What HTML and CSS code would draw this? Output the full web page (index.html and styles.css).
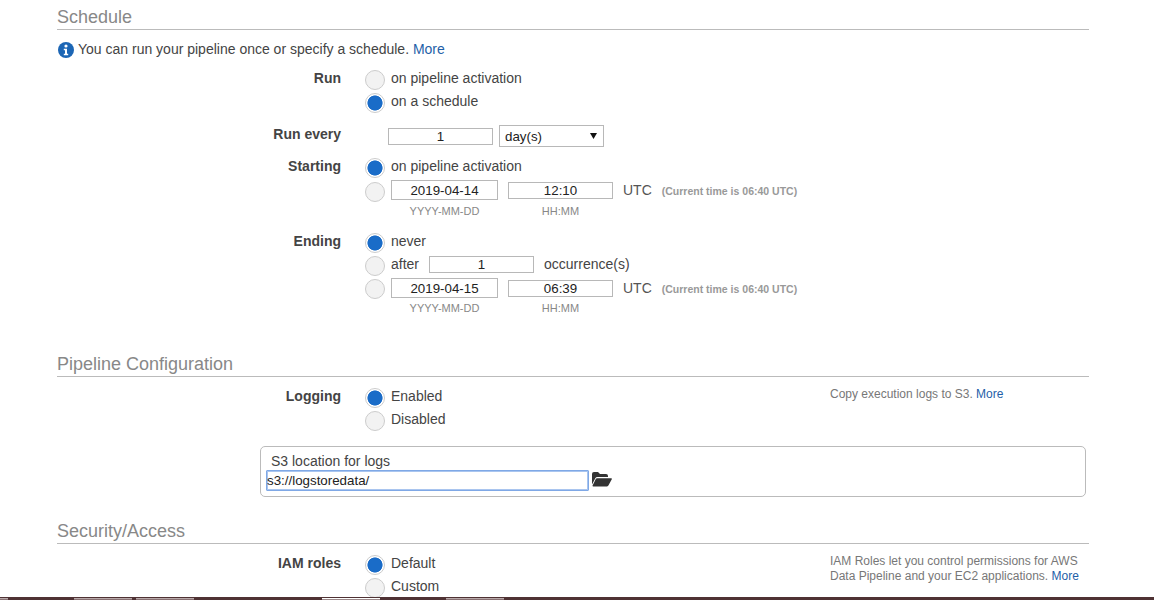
FILE: index.html
```html
<!DOCTYPE html>
<html lang="en">
<head>
<meta charset="utf-8">
<title>Schedule</title>
<link rel="stylesheet" href="styles.css">
</head>
<body>
<main class="page">
  <section class="schedule">
    <h2 class="heading">Schedule</h2>
    <p class="info">
      <svg class="info-icon" viewBox="0 0 16 16" width="16" height="16" aria-hidden="true"><circle cx="8" cy="8" r="8" fill="#1c66b5"/><circle cx="8" cy="4" r="1.6" fill="#fff"/><path d="M5.8 6.8h3.2v5h1.2v1.4H5.8v-1.4H7V8.2H5.8z" fill="#fff"/></svg>
      <span>You can run your pipeline once or specify a schedule. <a class="link" href="#">More</a></span>
    </p>
    <div class="field field-run">
      <div class="label">Run</div>
      <div class="controls">
        <label class="opt"><input class="radio" type="radio" name="run"><span>on pipeline activation</span></label>
        <label class="opt"><input class="radio" type="radio" name="run" checked><span>on a schedule</span></label>
      </div>
    </div>
    <div class="field field-every">
      <div class="label">Run every</div>
      <div class="every">
        <input class="box box-num" value="1">
        <div class="select"><span>day(s)</span><svg viewBox="0 0 7 6" width="7" height="6" aria-hidden="true"><path d="M0 0h7L3.500 6z" fill="#111"/></svg></div>
      </div>
    </div>
    <div class="field field-starting">
      <div class="label">Starting</div>
      <div class="controls">
        <label class="opt"><input class="radio" type="radio" name="start" checked><span>on pipeline activation</span></label>
        <div class="opt opt-date">
          <input class="radio" type="radio" name="start">
          <input class="box box-date" value="2019-04-14">
          <input class="box box-time" value="12:10">
          <span class="utc">UTC</span>
          <span class="now">(Current time is 06:40 UTC)</span>
        </div>
        <div class="hints"><span class="hint hint-date">YYYY-MM-DD</span><span class="hint">HH:MM</span></div>
      </div>
    </div>
    <div class="field field-ending">
      <div class="label">Ending</div>
      <div class="controls">
        <label class="opt"><input class="radio" type="radio" name="end" checked><span>never</span></label>
        <div class="opt">
          <input class="radio" type="radio" name="end">
          <span class="after">after</span>
          <input class="box box-num" value="1">
          <span class="occ">occurrence(s)</span>
        </div>
        <div class="opt opt-date">
          <input class="radio" type="radio" name="end">
          <input class="box box-date" value="2019-04-15">
          <input class="box box-time" value="06:39">
          <span class="utc">UTC</span>
          <span class="now">(Current time is 06:40 UTC)</span>
        </div>
        <div class="hints"><span class="hint hint-date">YYYY-MM-DD</span><span class="hint">HH:MM</span></div>
      </div>
    </div>
  </section>

  <section class="config">
    <h2 class="heading">Pipeline Configuration</h2>
    <div class="field field-help">
      <div class="label">Logging</div>
      <div class="controls">
        <label class="opt"><input class="radio" type="radio" name="log" checked><span>Enabled</span></label>
        <label class="opt"><input class="radio" type="radio" name="log"><span>Disabled</span></label>
      </div>
      <p class="help">Copy execution logs to S3. <a class="link" href="#">More</a></p>
    </div>
    <div class="s3">
      <div class="s3-label">S3 location for logs</div>
      <div class="s3-row">
        <input class="s3-input" value="s3://logstoredata/">
        <svg class="folder" viewBox="0 0 20 15" width="20" height="15" aria-hidden="true"><path d="M0 2a2 2 0 0 1 2-2h4l2 2h6a2 2 0 0 1 2 2v1H5.500a2.500 2.500 0 0 0-2.200 1.300L0 12.500z" fill="#333"/><path d="M5 6.200h14.200c.6 0 .9.5.6 1l-3.400 6.400a1.500 1.500 0 0 1-1.300.8H1.200c-.6 0-.9-.5-.6-1L3.800 7a1.400 1.400 0 0 1 1.200-.8z" fill="#333"/></svg>
      </div>
    </div>
  </section>

  <section class="security">
    <h2 class="heading">Security/Access</h2>
    <div class="field field-help">
      <div class="label">IAM roles</div>
      <div class="controls">
        <label class="opt"><input class="radio" type="radio" name="iam" checked><span>Default</span></label>
        <label class="opt"><input class="radio" type="radio" name="iam"><span>Custom</span></label>
      </div>
      <p class="help">IAM Roles let you control permissions for AWS<br>Data Pipeline and your EC2 applications. <a class="link" href="#">More</a></p>
    </div>
  </section>
</main>
<footer class="bar">
  <span class="tab tab-first"></span>
  <span class="tab tab-2"></span>
  <span class="tab tab-3"></span>
  <span class="tab tab-4 tab-active"></span>
  <span class="tab tab-5"></span>
</footer>
</body>
</html>
```
FILE: styles.css
```css
* { box-sizing: border-box; }
html, body { margin: 0; padding: 0; }
body {
  width: 1154px;
  height: 600px;
  overflow: hidden;
  display: flex;
  flex-direction: column;
  background: #fff;
  font-family: "Liberation Sans", Arial, sans-serif;
  font-size: 14px;
  color: #444;
}
.page { flex: 1; min-height: 0; overflow: hidden; padding: 0 65px 0 57px; }
.heading {
  margin: 0;
  height: 30px;
  padding-top: 6px;
  font-size: 18px;
  line-height: 22px;
  font-weight: 400;
  color: #888;
  border-bottom: 1px solid #bbb;
}
.info { display: flex; align-items: center; gap: 4px; margin: 11px 0 0 1px; height: 17px; line-height: 17px; }
.info-icon { flex: none; }
.link { color: #1f5fa8; text-decoration: none; }
.field { display: flex; }
.label { width: 284px; flex: none; text-align: right; font-weight: 700; line-height: 17px; }
.controls { margin-left: 24px; display: flex; flex-direction: column; gap: 3px; }
.opt { display: flex; align-items: flex-start; height: 20px; gap: 6px; line-height: 17px; }
.radio {
  appearance: none;
  -webkit-appearance: none;
  flex: none;
  width: 20px;
  height: 20px;
  margin: 0;
  border-radius: 50%;
  border: 1px solid #ccc;
  background: #f2f2f2;
}
.radio:checked {
  background: radial-gradient(circle, #1a6cc8 0 7.200px, #fff 7.900px);
}
.field-run { margin-top: 12px; }
.field-every { margin-top: 12px; }
.field-every .label { padding-top: 1px; }
.every { margin-left: 47px; display: flex; align-items: center; gap: 6px; height: 22px; }
.box {
  height: 17px;
  padding: 0;
  border: 1px solid #b8b8b8;
  border-radius: 0;
  background: #fff;
  font: 13.333px "Liberation Sans", Arial, sans-serif;
  color: #222;
  text-align: center;
  outline: none;
}
.box-num { width: 105px; }
.select {
  width: 105px;
  height: 22px;
  padding: 0 6px 0 5px;
  display: flex;
  align-items: center;
  justify-content: space-between;
  border: 1px solid #b8b8b8;
  font-size: 13.333px;
  color: #222;
}
.field-starting { margin-top: 11px; }
.field-starting .opt-date { margin-top: 1px; }
.opt-date .box-date { width: 107px; height: 20px; margin-top: -2px; }
.opt-date .box-time { width: 105px; margin-left: 4px; }
.utc { margin: 0 0 0 4px; color: #555; }
.now { margin: 1px 0 0 4px; font-size: 10.500px; line-height: 17px; font-weight: 700; color: #999; }
.hints { display: flex; height: 14px; margin-top: -1px; font-size: 11px; line-height: 14px; color: #888; padding-left: 26px; }
.hint { width: 105px; text-align: center; }
.hint-date { width: 107px; margin-right: 10px; }
.field-ending { margin-top: 15px; }
.field-ending .box-date { margin-top: -1px; }
.field-ending .box-time { margin-top: 1px; }
.field-ending .utc { margin-top: 1px; }
.field-ending .now { margin-top: 2px; }
.after { margin-right: 4px; }
.occ { margin-left: 4px; }
.config { margin-top: 32px; }
.field-help { margin-top: 11px; }
.help {
  margin: -1px 0 0 auto;
  width: 259px;
  font-size: 12px;
  line-height: 15px;
  color: #777;
}
.s3 {
  margin: 15px 3px 0 203px;
  height: 51px;
  padding: 5px 5px 0;
  border: 1px solid #bbb;
  border-radius: 5px;
}
.s3-label { padding-left: 5px; line-height: 18px; color: #444; }
.s3-row { display: flex; align-items: center; gap: 3px; }
.s3-input {
  width: 323px;
  height: 21px;
  padding: 0;
  border: 1px solid #7fa8e6;
  box-shadow: inset 0 0 0 1px #a9c5ef;
  border-radius: 1px;
  font: 13.333px "Liberation Sans", Arial, sans-serif;
  color: #222;
  outline: none;
}
.folder { flex: none; margin-top: -2px; }
.security { margin-top: 17px; }
.bar { flex: none; height: 3px; padding-top: 1px; display: flex; background: #4f3234; }
.tab { width: 58px; height: 2px; background: #8a7274; border-top: 1px solid #b8a9aa; }
.tab-first { width: 8px; }
.tab-2 { margin-left: 66px; }
.tab-3 { margin-left: 4px; }
.tab-4 { margin-left: 128px; }
.tab-5 { margin-left: 66px; }
.tab-active { background: #9c8a8b; border-top-color: #fff; }
```
